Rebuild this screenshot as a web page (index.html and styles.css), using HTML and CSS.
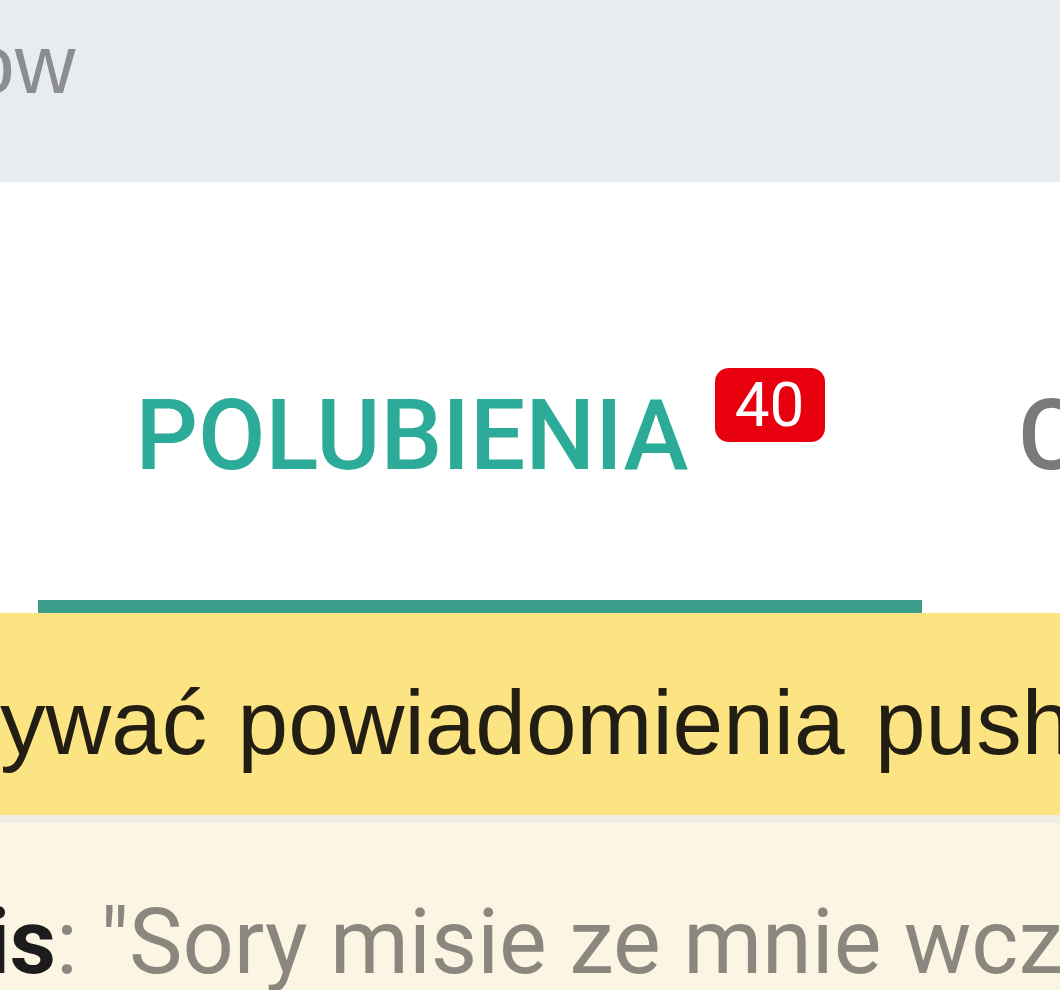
FILE: index.html
```html
<!DOCTYPE html>
<html lang="pl">
<head>
  <meta charset="UTF-8">
  <meta name="viewport" content="width=device-width, initial-scale=1.0">
  <title>Polubienia</title>
  <link rel="stylesheet" href="styles.css">
</head>
<body>

<header class="topbar">
  <span class="topbar-title">ow</span>
</header>

<nav class="tabs">
  <div class="tab active">
    <span class="tab-label">POLUBIENIA</span>
    <span class="badge">40</span>
  </div>
  <div class="tab">
    <span class="tab-label">C</span>
  </div>
</nav>

<div class="notice">
  <p>ywać powiadomienia push</p>
</div>

<div class="comment">
  <p><b>is</b>: "Sory misie ze mnie wcz</p>
</div>

</body>
</html>
```

FILE: styles.css
```css
body {
    margin: 0;
    padding: 0;
    width: 1060px;
    height: 990px;
    overflow: hidden;
    font-family: Roboto, "Noto Sans", Arial, sans-serif;
    background: #ffffff;
}
p {
    margin: 0;
    white-space: nowrap;
}
.topbar {
    height: 182px;
    background: #e9ecee;
    box-sizing: border-box;
    padding-top: 16px;
}
.topbar-title {
    display: block;
    margin-left: -32px;
    font-family: "Liberation Sans", Arial, sans-serif;
    font-size: 84px;
    line-height: 96px;
    color: #8c8d8f;
}
.tabs {
    display: flex;
    height: 431px;
    padding-left: 38px;
    box-sizing: border-box;
    white-space: nowrap;
}
.tab {
    flex: none;
    display: flex;
    align-items: flex-start;
    justify-content: center;
    box-sizing: border-box;
    padding-top: 196px;
    height: 100%;
    color: #7a7a7a;
}
.tab.active {
    width: 884px;
    color: #2bab98;
    border-bottom: 13px solid #3b9e8b;
}
.tab:not(.active) {
    padding-left: 96px;
}
.tab-label {
    font-size: 98px;
    font-weight: 500;
    line-height: 115px;
}
.badge {
    margin-left: 26px;
    margin-top: -10px;
    height: 74px;
    min-width: 110px;
    box-sizing: border-box;
    border-radius: 14px;
    background: #e8000f;
    color: #fff;
    font-size: 62px;
    line-height: 74px;
    text-align: center;
}
.notice {
    height: 202px;
    background: #fde483;
    box-sizing: border-box;
    padding-top: 55px;
}
.notice p {
    margin-left: 0;
    font-family: "Liberation Sans", Arial, sans-serif;
    font-size: 91px;
    line-height: 110px;
    word-spacing: 5px;
    color: #221e14;
}
.comment {
    height: 175px;
    background: #fdf5e3;
    border-top: 8px solid #f1ede2;
    box-sizing: border-box;
    padding-top: 70px;
}
.comment p {
    margin-left: -14px;
    font-size: 90px;
    line-height: 100px;
    color: #8a877f;
}
.comment b {
    color: #1c1c1c;
}
```
